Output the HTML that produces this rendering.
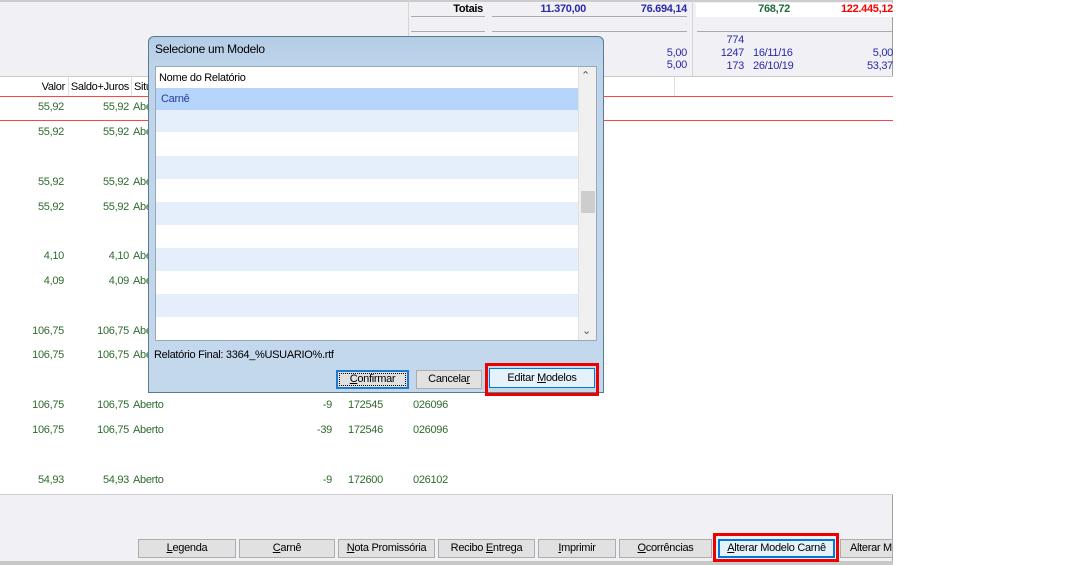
<!DOCTYPE html><html><head><meta charset="utf-8"><style>
*{margin:0;padding:0;box-sizing:border-box}
body{width:1080px;height:565px;background:#fff;font-family:"Liberation Sans",sans-serif;font-size:11px;position:relative;overflow:hidden;letter-spacing:-0.3px}
.a{position:absolute}
.g{color:#2f6b2f}
.r{text-align:right}
.b{color:#2a2aa8}
.btn{position:absolute;top:539px;height:19px;background:#e1e1e1;border:1px solid #adadad;text-align:center;line-height:17px;font-size:11px;color:#000}
.row{position:absolute;left:0;width:422px;height:23px}
</style></head><body>
<div class="a" style="left:0;top:0;width:893px;height:565px;background:#f0f0f5;border-right:1px solid #a0a0a0"></div>
<div class="a" style="left:0;top:0;width:893px;height:2px;background:#ccc"></div>
<div class="a" style="left:408px;top:0;width:1px;height:76px;background:#d5d5d5"></div>
<div class="a" style="left:692px;top:0;width:1px;height:76px;background:#d5d5d5"></div>
<div class="a" style="left:696px;top:3px;width:197px;height:14px;background:#fff"></div>
<div class="a" style="left:411px;top:16px;width:74px;height:1px;background:#aaa"></div>
<div class="a" style="left:492px;top:16px;width:195px;height:1px;background:#aaa"></div>
<div class="a" style="left:411px;top:31px;width:74px;height:1px;background:#aaa"></div>
<div class="a" style="left:492px;top:31px;width:195px;height:1px;background:#aaa"></div>
<div class="a" style="left:697px;top:31px;width:196px;height:1px;background:#aaa"></div>
<div class="a r" style="left:420px;top:3px;width:63px;font-weight:bold">Totais</div>
<div class="a r b" style="left:500px;top:3px;width:86px;font-weight:bold">11.370,00</div>
<div class="a r b" style="left:600px;top:3px;width:87px;font-weight:bold">76.694,14</div>
<div class="a r" style="left:700px;top:3px;width:90px;font-weight:bold;color:#1f6a3a">768,72</div>
<div class="a r" style="left:790px;top:3px;width:103px;font-weight:bold;color:#f00">122.445,12</div>
<div class="a r b" style="left:600px;top:47px;width:87px">5,00<br>5,00</div>
<div class="a r b" style="left:700px;top:34px;width:44px;line-height:13px">774<br>1247<br>173</div>
<div class="a b" style="left:753px;top:47px;line-height:13px">16/11/16<br>26/10/19</div>
<div class="a r b" style="left:800px;top:47px;width:93px;line-height:13px">5,00<br>53,37</div>
<div class="a" style="left:0;top:76px;width:893px;height:419px;background:#fff;border-top:1px solid #ccc;border-bottom:1px solid #ccc"></div>
<div class="a" style="left:674px;top:77px;width:1px;height:19px;background:#e0e0e0"></div>
<div class="a" style="left:0;top:96px;width:893px;height:1px;background:#f44"></div>
<div class="a" style="left:0;top:120px;width:893px;height:1px;background:#f44"></div>
<div class="a r" style="left:20px;top:81px;width:45px">Valor</div>
<div class="a" style="left:68px;top:77px;width:1px;height:19px;background:#e0e0e0"></div>
<div class="a r" style="left:70px;top:81px;width:59px">Saldo+Juros</div>
<div class="a" style="left:131px;top:77px;width:1px;height:19px;background:#e0e0e0"></div>
<div class="a" style="left:134px;top:81px">Situ</div>
<div class="a g" style="left:0;top:0">
<div class="a r" style="left:10px;top:101px;width:54px">55,92</div><div class="a r" style="left:70px;top:101px;width:59px">55,92</div><div class="a" style="left:133px;top:101px">Abe</div>
<div class="a r" style="left:10px;top:126px;width:54px">55,92</div><div class="a r" style="left:70px;top:126px;width:59px">55,92</div><div class="a" style="left:133px;top:126px">Abe</div>
<div class="a r" style="left:10px;top:176px;width:54px">55,92</div><div class="a r" style="left:70px;top:176px;width:59px">55,92</div><div class="a" style="left:133px;top:176px">Abe</div>
<div class="a r" style="left:10px;top:201px;width:54px">55,92</div><div class="a r" style="left:70px;top:201px;width:59px">55,92</div><div class="a" style="left:133px;top:201px">Abe</div>
<div class="a r" style="left:10px;top:250px;width:54px">4,10</div><div class="a r" style="left:70px;top:250px;width:59px">4,10</div><div class="a" style="left:133px;top:250px">Abe</div>
<div class="a r" style="left:10px;top:275px;width:54px">4,09</div><div class="a r" style="left:70px;top:275px;width:59px">4,09</div><div class="a" style="left:133px;top:275px">Abe</div>
<div class="a r" style="left:10px;top:325px;width:54px">106,75</div><div class="a r" style="left:70px;top:325px;width:59px">106,75</div><div class="a" style="left:133px;top:325px">Abe</div>
<div class="a r" style="left:10px;top:349px;width:54px">106,75</div><div class="a r" style="left:70px;top:349px;width:59px">106,75</div><div class="a" style="left:133px;top:349px">Abe</div>
<div class="a r" style="left:10px;top:399px;width:54px">106,75</div><div class="a r" style="left:70px;top:399px;width:59px">106,75</div><div class="a" style="left:133px;top:399px">Aberto</div>
<div class="a r" style="left:10px;top:424px;width:54px">106,75</div><div class="a r" style="left:70px;top:424px;width:59px">106,75</div><div class="a" style="left:133px;top:424px">Aberto</div>
<div class="a r" style="left:10px;top:474px;width:54px">54,93</div><div class="a r" style="left:70px;top:474px;width:59px">54,93</div><div class="a" style="left:133px;top:474px">Aberto</div>
<div class="a r" style="left:290px;top:399px;width:42px">-9</div><div class="a" style="left:348px;top:399px">172545</div><div class="a" style="left:413px;top:399px">026096</div>
<div class="a r" style="left:290px;top:424px;width:42px">-39</div><div class="a" style="left:348px;top:424px">172546</div><div class="a" style="left:413px;top:424px">026096</div>
<div class="a r" style="left:290px;top:474px;width:42px">-9</div><div class="a" style="left:348px;top:474px">172600</div><div class="a" style="left:413px;top:474px">026102</div>
</div>
<div class="a" style="left:0;top:561px;width:893px;height:4px;background:#c8c8c8"></div>
<div class="btn" style="left:138px;width:98px"><u>L</u>egenda</div>
<div class="btn" style="left:239px;width:96px"><u>C</u>arnê</div>
<div class="btn" style="left:338px;width:97px"><u>N</u>ota Promissória</div>
<div class="btn" style="left:438px;width:97px">Recibo <u>E</u>ntrega</div>
<div class="btn" style="left:538px;width:78px"><u>I</u>mprimir</div>
<div class="btn" style="left:619px;width:93px"><u>O</u>corrências</div>
<div class="btn" style="left:718px;width:117px;background:#e5f1fb;border:2px solid #0078d7;line-height:15px"><u>A</u>lterar Modelo Carnê</div>
<div class="a" style="left:713px;top:533px;width:126px;height:29px;border:3px solid #e00"></div>
<div class="btn" style="left:840px;width:53px;text-align:left;padding-left:9px;overflow:hidden;white-space:nowrap">Alterar Mo</div>
<div class="a" style="left:148px;top:36px;width:456px;height:357px;border:1px solid #5a7a90;border-radius:6px 6px 0 0;background:linear-gradient(#b4cde6,#bed4ea 30px,#c4d8ec)"></div>
<div class="a" style="left:155px;top:42px;font-size:12px;color:#000">Selecione um Modelo</div>
<div class="a" style="left:155px;top:66px;width:442px;height:275px;background:#fff;border:1px solid #9aa8b8;overflow:hidden">
<div class="row" style="top:0;background:#fff"><span class="a" style="left:3px;top:5px">Nome do Relatório</span></div>
<div class="row" style="top:21px;background:#b5d6fa"><span class="a" style="left:5px;top:5px;color:#2a3aa0">Carnê</span></div>
<div class="row" style="top:43px;background:#e4effb;border-bottom:1px solid #fff"></div>
<div class="row" style="top:89px;background:#e4effb"></div>
<div class="row" style="top:135px;background:#e4effb"></div>
<div class="row" style="top:181px;background:#e4effb"></div>
<div class="row" style="top:227px;background:#e4effb"></div>
<div class="a" style="left:422px;top:0;width:19px;height:273px;background:#f0f0f0;border-left:1px solid #e0e0e0"></div>
<div class="a" style="left:425px;top:2px;color:#555;font-size:11px">&#8963;</div>
<div class="a" style="left:425px;top:124px;width:14px;height:22px;background:#cdcdcd"></div>
<div class="a" style="left:426px;top:257px;color:#555;font-size:11px">&#8964;</div>
</div>
<div class="a" style="left:154px;top:349px">Relatório Final: 3364_%USUARIO%.rtf</div>
<div class="a" style="left:336px;top:370px;width:73px;height:19px;background:#e1e1e1;border:2px solid #1a7ad0;outline:1px dotted #000;outline-offset:-4px;text-align:center;line-height:15px"><u>C</u>onfirmar</div>
<div class="a" style="left:416px;top:370px;width:66px;height:19px;background:#e1e1e1;border:1px solid #adadad;text-align:center;line-height:17px">Cancela<u>r</u></div>
<div class="a" style="left:489px;top:368px;width:106px;height:20px;background:#e5f1fb;border:1px solid #0078d7;text-align:center;line-height:18px">Editar <u>M</u>odelos</div>
<div class="a" style="left:485px;top:363px;width:114px;height:33px;border:3px solid #e00"></div>
</body></html>
